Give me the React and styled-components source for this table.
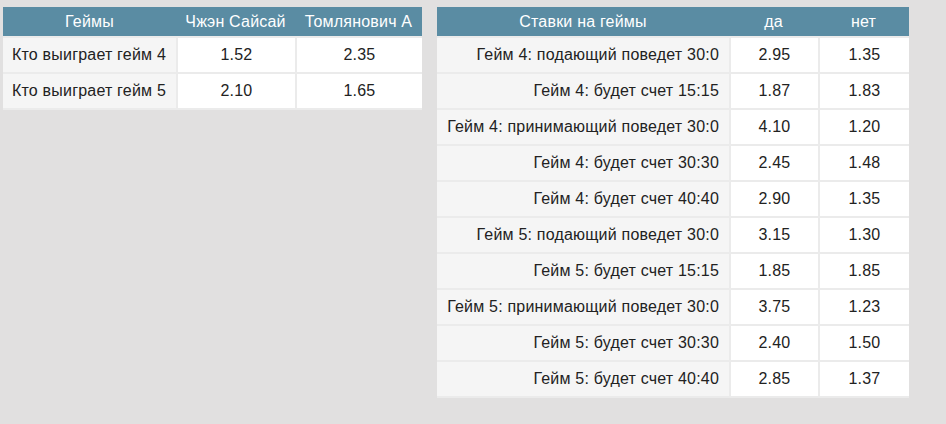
import React from "react";
import styled, { createGlobalStyle } from "styled-components";

const Global = createGlobalStyle`
  html, body {
    margin: 0;
    background: #e1e0e0;
  }
  body {
    font-family: "Liberation Sans", Arial, sans-serif;
    font-size: 16px;
    letter-spacing: 0.2px;
    color: #222;
  }
`;

const Page = styled.div`
  display: flex;
  align-items: flex-start;
  gap: 15px;
  padding: 7px 0 0 3px;
`;

const Table = styled.table`
  border-collapse: separate;
  border-spacing: 0;
  table-layout: fixed;
  width: ${(p) => p.$width}px;
`;

const Head = styled.th`
  background: #5a8ca3;
  color: #fff;
  font-weight: normal;
  height: 29px;
  padding: 0;
  text-align: center;
  white-space: nowrap;
`;

const Row = styled.tr`
  &:last-child td {
    border-bottom: 2px solid #ebebeb;
  }
`;

const Cell = styled.td`
  height: 34px;
  padding: 0;
  background: #fff;
  text-align: center;
  white-space: nowrap;
  border-top: 2px solid #ebebeb;
  border-left: 2px solid #ebebeb;
`;

const Label = styled(Cell)`
  background: #f5f5f5;
  border-left: none;
  text-align: ${(p) => p.$align};
  padding: ${(p) => (p.$align === "left" ? "0 0 0 9px" : "0 10px 0 0")};
`;

const games = [
  ["Кто выиграет гейм 4", "1.52", "2.35"],
  ["Кто выиграет гейм 5", "2.10", "1.65"],
];

const bets = [
  ["Гейм 4: подающий поведет 30:0", "2.95", "1.35"],
  ["Гейм 4: будет счет 15:15", "1.87", "1.83"],
  ["Гейм 4: принимающий поведет 30:0", "4.10", "1.20"],
  ["Гейм 4: будет счет 30:30", "2.45", "1.48"],
  ["Гейм 4: будет счет 40:40", "2.90", "1.35"],
  ["Гейм 5: подающий поведет 30:0", "3.15", "1.30"],
  ["Гейм 5: будет счет 15:15", "1.85", "1.85"],
  ["Гейм 5: принимающий поведет 30:0", "3.75", "1.23"],
  ["Гейм 5: будет счет 30:30", "2.40", "1.50"],
  ["Гейм 5: будет счет 40:40", "2.85", "1.37"],
];

const OddsTable = ({ width, cols, heads, rows, align }) => (
  <Table $width={width}>
    <colgroup>
      {cols.map((w, i) => (
        <col key={i} style={{ width: w }} />
      ))}
    </colgroup>
    <thead>
      <tr>
        {heads.map((h) => (
          <Head key={h}>{h}</Head>
        ))}
      </tr>
    </thead>
    <tbody>
      {rows.map(([name, a, b]) => (
        <Row key={name}>
          <Label $align={align}>{name}</Label>
          <Cell>{a}</Cell>
          <Cell>{b}</Cell>
        </Row>
      ))}
    </tbody>
  </Table>
);

export default function App() {
  return (
    <>
      <Global />
      <Page>
        <OddsTable
          width={419}
          cols={[173, 119, 127]}
          heads={["Геймы", "Чжэн Сайсай", "Томлянович А"]}
          rows={games}
          align="left"
        />
        <OddsTable
          width={472}
          cols={[292, 89, 91]}
          heads={["Ставки на геймы", "да", "нет"]}
          rows={bets}
          align="right"
        />
      </Page>
    </>
  );
}
